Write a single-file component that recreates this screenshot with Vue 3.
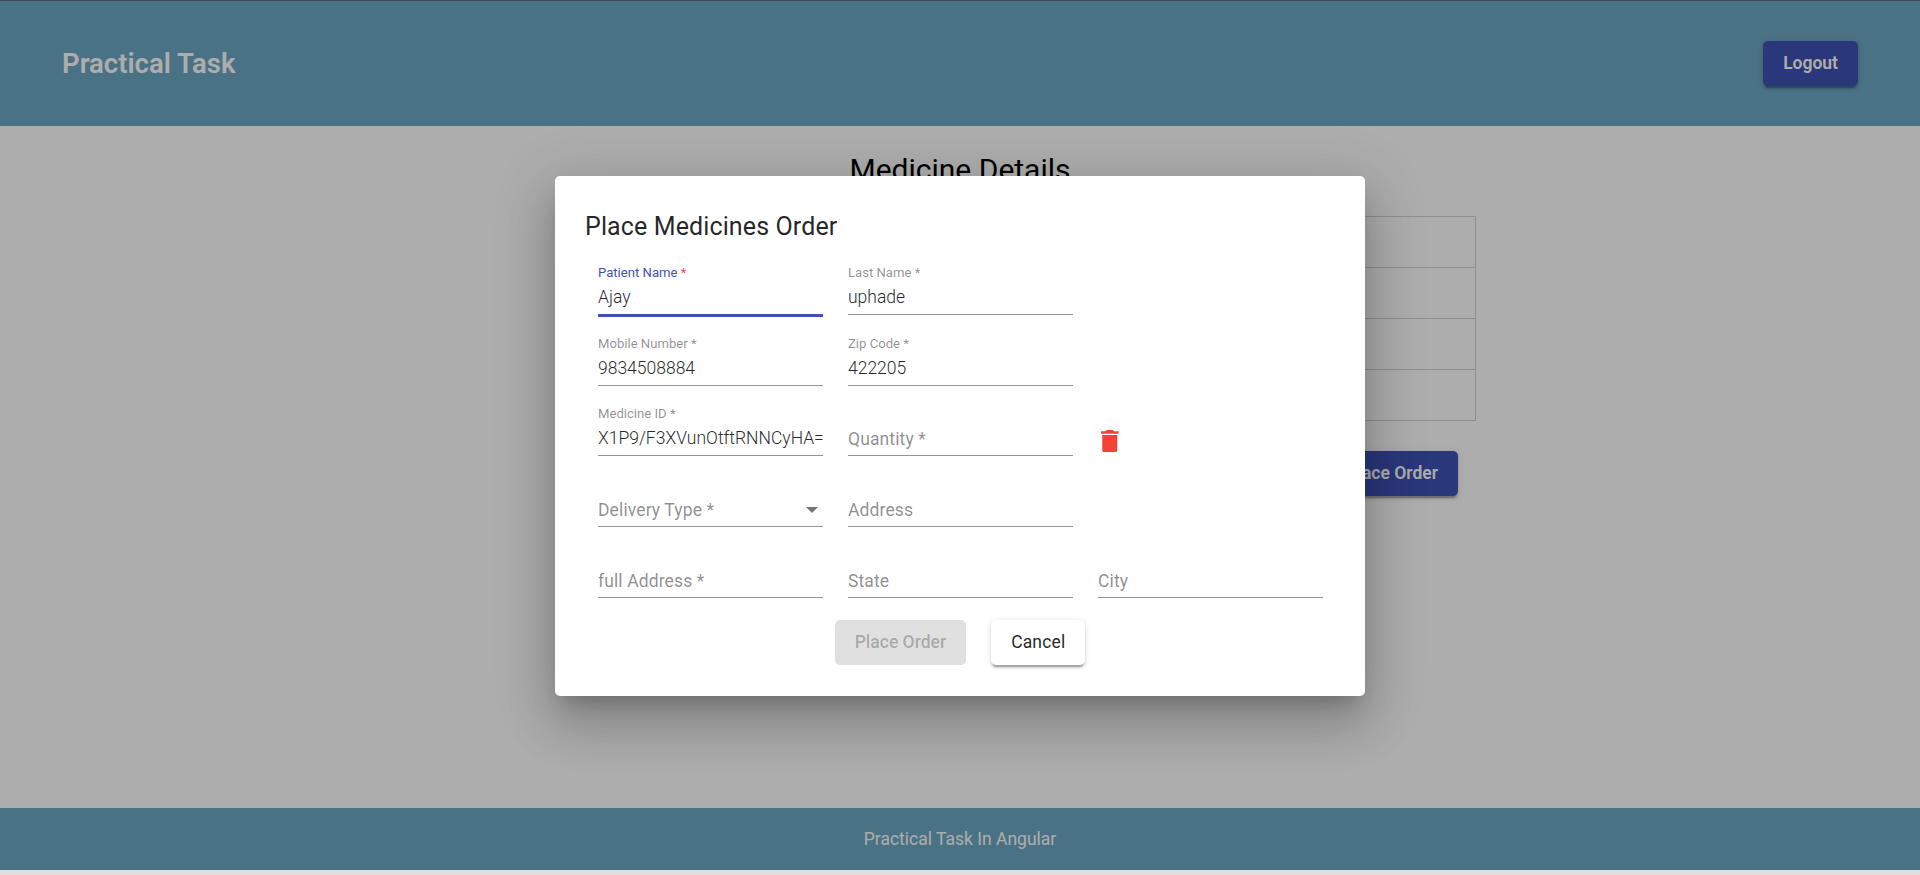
<script setup>
const table = [1, 2, 3, 4]
</script>

<template>
  <div class="page">
    <header class="topbar">
      <span class="brand">Practical Task</span>
      <button class="btn primary" type="button">Logout</button>
    </header>

    <main class="content">
      <h2 class="heading">Medicine Details</h2>
      <div class="table">
        <div v-for="r in table" :key="r" class="row"></div>
      </div>
      <div class="actions">
        <button class="btn primary" type="button">Place Order</button>
      </div>
    </main>

    <footer class="footer">Practical Task In Angular</footer>
    <div class="strip"></div>

    <div class="backdrop"></div>
    <div class="dialog-wrap">
      <section class="dialog">
        <h2 class="title">Place Medicines Order</h2>
        <form class="form">
          <div class="field focused">
            <label class="float">Patient Name <span class="star">*</span></label>
            <div class="value">Ajay</div>
          </div>
          <div class="field">
            <label class="float">Last Name *</label>
            <div class="value">uphade</div>
          </div>
          <div></div>

          <div class="field">
            <label class="float">Mobile Number *</label>
            <div class="value">9834508884</div>
          </div>
          <div class="field">
            <label class="float">Zip Code *</label>
            <div class="value">422205</div>
          </div>
          <div></div>

          <div class="field">
            <label class="float">Medicine ID *</label>
            <div class="value">X1P9/F3XVunOtftRNNCyHA==</div>
          </div>
          <div class="field">
            <div class="value placeholder">Quantity *</div>
          </div>
          <div class="trash-cell">
            <svg class="trash" viewBox="5 3 14 18" aria-hidden="true">
              <path d="M6 19c0 1.1.9 2 2 2h8c1.1 0 2-.9 2-2V7H6v12zM19 4h-3.5l-1-1h-5l-1 1H5v2h14V4z" />
            </svg>
          </div>

          <div class="field">
            <div class="value placeholder select">
              <span>Delivery Type *</span>
              <i class="arrow"></i>
            </div>
          </div>
          <div class="field">
            <div class="value placeholder">Address</div>
          </div>
          <div></div>

          <div class="field">
            <div class="value placeholder">full Address *</div>
          </div>
          <div class="field">
            <div class="value placeholder">State</div>
          </div>
          <div class="field">
            <div class="value placeholder">City</div>
          </div>
        </form>
        <div class="dialog-actions">
          <button class="btn disabled" type="button">Place Order</button>
          <button class="btn plain" type="button">Cancel</button>
        </div>
      </section>
    </div>
  </div>
</template>

<style>
html, body { margin: 0; background: #fff; }
</style>

<style scoped>
.page {
  position: relative;
  height: 875px;
  display: flex;
  flex-direction: column;
  overflow: hidden;
  font-family: Roboto, "Liberation Sans", sans-serif;
  background: #fff;
}
.topbar {
  height: 125px;
  flex: none;
  border-top: 1px solid #5e6a70;
  background: #6da8c4;
  display: flex;
  align-items: center;
  justify-content: space-between;
  padding: 0 62px;
  color: #fff;
}
.brand { font-size: 27.5px; font-weight: 560; line-height: 40px; }
.btn {
  height: 45px;
  padding: 0 20px;
  border: 0;
  border-radius: 5px;
  font-family: inherit;
  font-size: 17.5px;
  font-weight: 500;
  line-height: 45px;
  white-space: nowrap;
}
.primary {
  background: #3f51b5;
  color: #fff;
  font-weight: 570;
  box-shadow: 0 4px 1px -2px rgba(0,0,0,.2), 0 2.5px 2.5px 0 rgba(0,0,0,.14), 0 1px 6px 0 rgba(0,0,0,.12);
}
.plain {
  background: #fff;
  color: rgba(0,0,0,.87);
  font-weight: 420;
  letter-spacing: .15px;
  box-shadow: 0 4px 1px -2px rgba(0,0,0,.2), 0 2.5px 2.5px 0 rgba(0,0,0,.14), 0 1px 6px 0 rgba(0,0,0,.12);
}
.disabled {
  background: #e0e0e0;
  color: rgba(0,0,0,.26);
}
.content {
  flex: 1;
  display: flex;
  flex-direction: column;
  padding-top: 24px;
}
.heading {
  margin: 0 0 26px;
  font-size: 30px;
  font-weight: 380;
  line-height: 40px;
  text-align: center;
  color: #000;
}
.table {
  margin: 0 444px 0 600px;
  border: 1px solid #d2d2d2;
  border-bottom: 0;
}
.row {
  height: 50px;
  border-bottom: 1px solid #d2d2d2;
}
.actions {
  display: flex;
  justify-content: flex-end;
  margin: 30px 462px 0 0;
}
.footer {
  height: 62px;
  flex: none;
  background: #6da8c4;
  color: #fff;
  font-size: 17.5px;
  line-height: 62px;
  text-align: center;
}
.strip {
  height: 5px;
  flex: none;
  background: #e0dfdd;
}
.backdrop {
  position: absolute;
  left: 0;
  right: 0;
  top: 0;
  height: 870px;
  background: rgba(0,0,0,.32);
}
.dialog-wrap {
  position: absolute;
  inset: 176px 0 auto 0;
  display: flex;
  justify-content: center;
}
.dialog {
  width: 810px;
  height: 520px;
  box-sizing: border-box;
  padding: 33px 30px 0;
  border-radius: 5px;
  background: #fff;
  box-shadow: 0 14px 19px -9px rgba(0,0,0,.2), 0 30px 48px 4px rgba(0,0,0,.14), 0 11px 58px 10px rgba(0,0,0,.12);
}
.title {
  margin: 0;
  font-size: 25px;
  font-weight: 450;
  letter-spacing: .12px;
  line-height: 35px;
  color: rgba(0,0,0,.87);
}
.form {
  display: grid;
  grid-template-columns: 225px 225px 225px;
  grid-auto-rows: 70.75px;
  column-gap: 25px;
  padding-left: 13px;
}
.field {
  display: flex;
  flex-direction: column;
  justify-content: flex-end;
  min-width: 0;
}
.float {
  font-size: 13.125px;
  font-weight: 380;
  line-height: 16px;
  margin-bottom: 6px;
  color: rgba(0,0,0,.45);
  white-space: nowrap;
  transform: translateY(1px);
}
.value {
  font-size: 17.5px;
  font-weight: 360;
  line-height: 20px;
  padding: 1px 0 7px;
  border-bottom: 1px solid rgba(0,0,0,.42);
  color: rgba(0,0,0,.87);
  white-space: nowrap;
  overflow: hidden;
}
.placeholder {
  padding: 2px 0 6px;
  color: rgba(0,0,0,.46);
  font-weight: 400;
  letter-spacing: .12px;
}
.select {
  display: flex;
  align-items: center;
  justify-content: space-between;
}
.arrow {
  width: 0;
  height: 0;
  margin-right: 5px;
  border-left: 6.25px solid transparent;
  border-right: 6.25px solid transparent;
  border-top: 6.25px solid rgba(0,0,0,.54);
}
.focused .float { color: #3f51b5; }
.star { color: #ff4081; }
.focused .value {
  border-bottom: 3px solid #3f51b5;
  margin-bottom: -2px;
}
.trash-cell {
  display: flex;
  align-items: flex-end;
  padding: 0 0 4px 3px;
}
.trash {
  width: 17.5px;
  height: 22.5px;
  fill: #f44336;
}
.dialog-actions {
  display: flex;
  justify-content: center;
  gap: 25px;
  margin-top: 22.5px;
}
</style>
